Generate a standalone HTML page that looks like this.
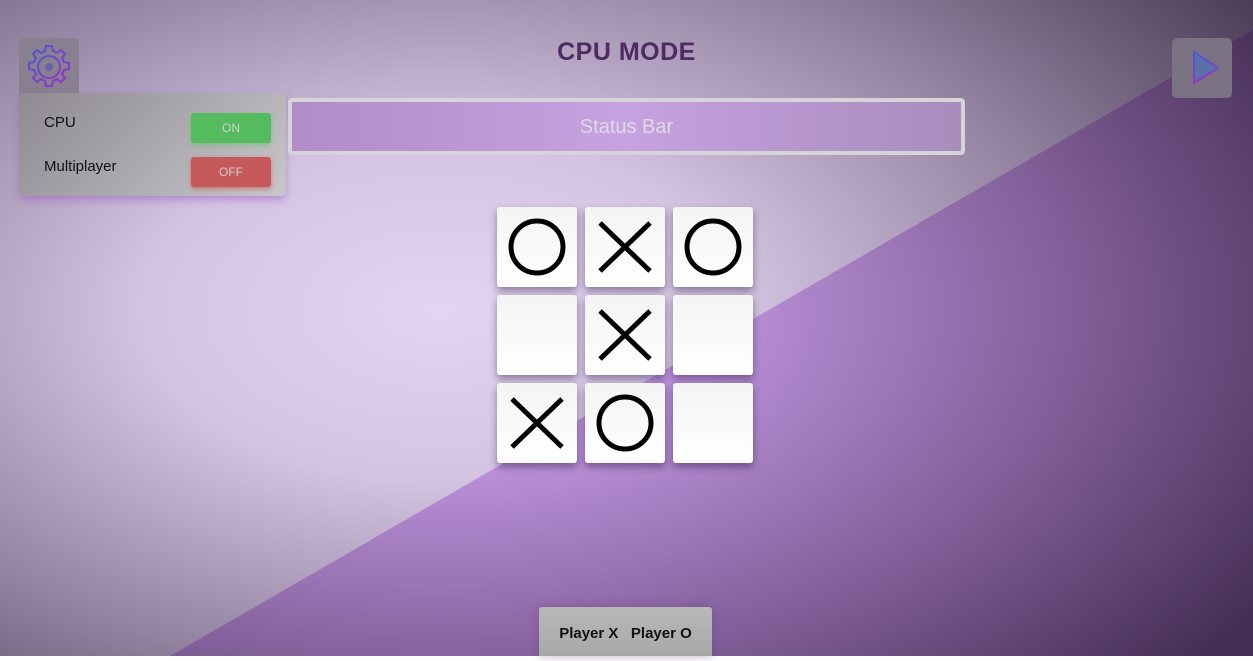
<!DOCTYPE html>
<html><head><style>
body{margin:0;width:1253px;height:656px;overflow:hidden;position:relative;font-family:"Liberation Sans",sans-serif;}
.bg{position:absolute;left:0;top:0}
.vig{position:absolute;left:0;top:0;width:1253px;height:656px;background:radial-gradient(ellipse 980px 560px at 440px 310px,rgba(25,8,35,0) 0%,rgba(25,8,35,0.08) 30%,rgba(25,8,35,0.4) 65%,rgba(25,8,35,0.75) 100%);}
.title{position:absolute;top:38px;left:0;width:1253px;text-align:center;font-weight:bold;font-size:25px;color:#4f2b62;letter-spacing:0.5px}
.gear{position:absolute;left:19px;top:38px;width:60px;height:60px;background:#888090;border-radius:4px 4px 0 0;}
.panel{position:absolute;left:19px;top:93px;width:267px;height:103px;border-radius:0 0 6px 6px;background:linear-gradient(135deg,#8e8a90,#c8c6ca);box-shadow:0 4px 8px rgba(150,90,200,0.5);}
.lbl{position:absolute;left:25px;font-size:15px;color:#111;}
.btn{position:absolute;left:172px;width:80px;height:30px;border-radius:3px;color:#cfcfcf;font-size:12px;text-align:center;line-height:31px;}
.status{position:absolute;left:288px;top:98px;width:669px;height:49px;border:4px solid #d6d4d8;border-radius:4px;background:linear-gradient(90deg,#b08cc8,#c6a2e0 50%,#a88cbc);color:#e0d8e4;font-size:20px;text-align:center;line-height:51px;}
.cell{position:absolute;width:80px;height:80px;background:linear-gradient(#f4f4f4,#fff);border-radius:3px;box-shadow:0 4px 8px rgba(40,20,60,0.45);}
.cell svg{position:absolute;left:0;top:0}
.play{position:absolute;left:1172px;top:38px;width:60px;height:60px;background:#7a7282;border-radius:5px;}
.players{position:absolute;left:539px;top:607px;width:173px;height:49px;background:linear-gradient(#b8b8b8,#a8a8a8);border-radius:3px 3px 0 0;font-size:15px;font-weight:bold;color:#111;text-align:center;line-height:54px;box-shadow:0 0 10px rgba(100,50,130,0.4);}
</style></head><body>
<svg class="bg" width="1253" height="656">
<rect width="1253" height="656" fill="#e4d4f2"/>
<polygon points="1253,30 1253,656 170,656" fill="#c699e6"/>
</svg>
<div class="vig"></div>
<div class="title">CPU MODE</div>
<div class="gear"><svg width="60" height="60" viewBox="0 0 60 60">
<defs><linearGradient id="g" x1="0" y1="0" x2="1" y2="1"><stop offset="0" stop-color="#4a5ad0"/><stop offset="1" stop-color="#9a30c8"/></linearGradient></defs>
<path d="M27 8h6l1 5 4 2 4-3 4 4-3 4 2 4 5 1v6l-5 1-2 4 3 4-4 4-4-3-4 2-1 5h-6l-1-5-4-2-4 3-4-4 3-4-2-4-5-1v-6l5-1 2-4-3-4 4-4 4 3 4-2z" fill="none" stroke="url(#g)" stroke-width="2"/>
<circle cx="30" cy="29" r="11" fill="none" stroke="url(#g)" stroke-width="2"/>
<circle cx="30" cy="29" r="4" fill="#6a60b0"/></svg></div>
<div class="panel">
<div class="lbl" style="top:21px">CPU</div>
<div class="lbl" style="top:65px">Multiplayer</div>
<div class="btn" style="top:20px;background:#55bb5f;box-shadow:0 2px 5px rgba(80,200,90,0.6)">ON</div>
<div class="btn" style="top:64px;background:#c65a5a;box-shadow:0 2px 5px rgba(200,80,80,0.6)">OFF</div>
</div>
<div class="status">Status Bar</div>
<div class="play"><svg width="60" height="60" viewBox="0 0 60 60"><defs><linearGradient id="p" x1="0" y1="0" x2="0" y2="1"><stop offset="0" stop-color="#4a5ad0"/><stop offset="1" stop-color="#a030c8"/></linearGradient></defs>
<path d="M22 14v31l24-15z" fill="#5a70a8" stroke="url(#p)" stroke-width="2" stroke-linejoin="round"/></svg></div>

<div class="cell" style="left:497px;top:207px"><svg width="80" height="80"><circle cx="40" cy="40" r="26" fill="none" stroke="#000" stroke-width="5"/></svg></div>
<div class="cell" style="left:585px;top:207px"><svg width="80" height="80"><path d="M15 16L65 64M65 16L15 64" stroke="#000" stroke-width="5"/></svg></div>
<div class="cell" style="left:673px;top:207px"><svg width="80" height="80"><circle cx="40" cy="40" r="26" fill="none" stroke="#000" stroke-width="5"/></svg></div>
<div class="cell" style="left:497px;top:295px"></div>
<div class="cell" style="left:585px;top:295px"><svg width="80" height="80"><path d="M15 16L65 64M65 16L15 64" stroke="#000" stroke-width="5"/></svg></div>
<div class="cell" style="left:673px;top:295px"></div>
<div class="cell" style="left:497px;top:383px"><svg width="80" height="80"><path d="M15 16L65 64M65 16L15 64" stroke="#000" stroke-width="5"/></svg></div>
<div class="cell" style="left:585px;top:383px"><svg width="80" height="80"><circle cx="40" cy="40" r="26" fill="none" stroke="#000" stroke-width="5"/></svg></div>
<div class="cell" style="left:673px;top:383px"></div>

<div class="players">Player X&nbsp;&nbsp;&nbsp;Player O</div>
</body></html>
